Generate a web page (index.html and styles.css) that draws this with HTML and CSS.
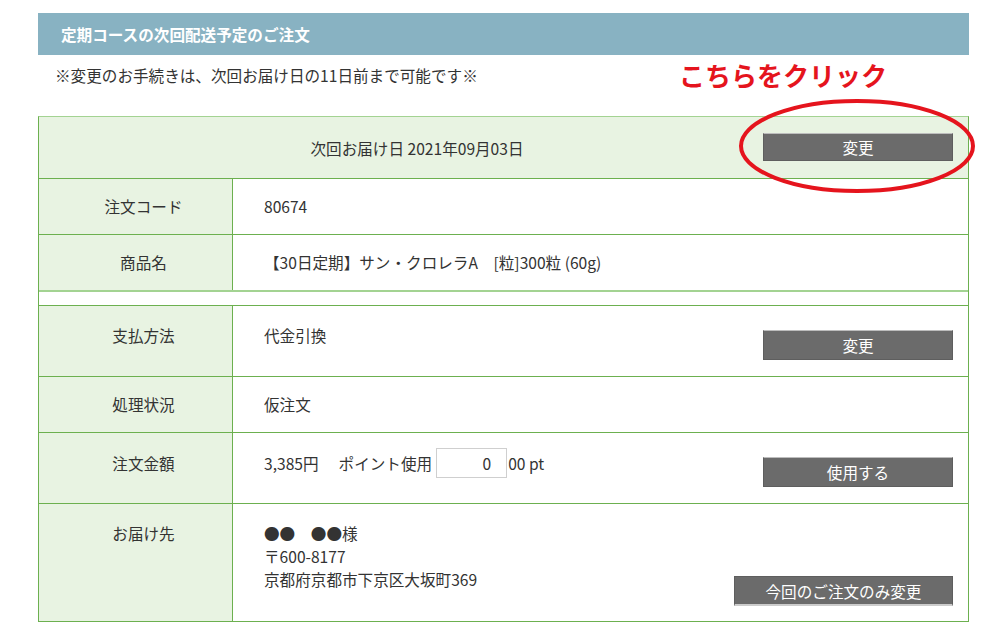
FILE: index.html
```html
<!DOCTYPE html>
<html lang="ja">
    <head>
        <meta charset="utf-8">
        <link rel="stylesheet" href="styles.css">
    </head>
    <body>
        <main class="page">
            <h2 class="head">定期コースの次回配送予定のご注文</h2>
            <p class="notice">※変更のお手続きは、次回お届け日の11日前まで可能です※</p>

            <section class="order">
                <div class="next">
                    <span class="next-date">次回お届け日 2021年09月03日</span>
                    <button class="btn btn-next">変更</button>
                </div>
                <div class="row">
                    <div class="label">注文コード</div>
                    <div class="value">80674</div>
                </div>
                <div class="row">
                    <div class="label">商品名</div>
                    <div class="value">【30日定期】サン・クロレラA　[粒]300粒 (60g)</div>
                </div>
                <div class="gap"></div>
                <div class="row row-pay">
                    <div class="label">支払方法</div>
                    <div class="value">
                        <span>代金引換</span>
                        <button class="btn">変更</button>
                    </div>
                </div>
                <div class="row">
                    <div class="label">処理状況</div>
                    <div class="value">仮注文</div>
                </div>
                <div class="row row-price">
                    <div class="label">注文金額</div>
                    <div class="value">
                        <span class="price">3,385円<span class="pt-label">ポイント使用</span><input class="pt-input" type="text" value="0"><span class="pt-unit">00 pt</span></span>
                        <button class="btn">使用する</button>
                    </div>
                </div>
                <div class="row row-addr">
                    <div class="label">お届け先</div>
                    <div class="value">
                        <div class="addr">
                            ●●　●●様<br>
                            〒600-8177<br>
                            京都府京都市下京区大坂町369
                        </div>
                        <button class="btn btn-wide">今回のご注文のみ変更</button>
                    </div>
                </div>
            </section>

            <!-- annotation drawn over the screenshot -->
            <div class="callout">こちらをクリック</div>
            <svg class="ring" width="244" height="104" viewBox="0 0 244 104">
                <ellipse cx="122" cy="50" rx="116" ry="45" fill="none" stroke="#e5141d" stroke-width="4"/>
            </svg>
        </main>
    </body>
</html>
```

FILE: styles.css
```css
body{
    margin: 0;
    background: #fff;
    color: #333;
    font-family: "Noto Sans CJK JP", "Noto Sans", sans-serif;
    font-size: 15.6px;
}
.page{
    position: relative;
    width: 931px;
    padding: 13px 0 0 38px;
}
.head{
    margin: 0;
    height: 42px;
    line-height: 42px;
    padding-left: 23px;
    background: #88b2c2;
    color: #fff;
    font-size: 15.6px;
    font-weight: bold;
}
.notice{
    margin: 9px 0 0;
    padding-left: 17px;
    line-height: 23px;
}
.order{
    margin-top: 29px;
    border: 1px solid #6cb04f;
    border-top-color: #a3d392;
}
.next{
    display: flex;
    align-items: center;
    height: 61px;
    background: #e8f3e2;
}
.next-date{
    flex: 1;
    text-align: center;
    padding-left: 32px;
}
.btn{
    width: 190px;
    height: 30px;
    padding: 0;
    border: 1px solid #5e5e5e;
    border-top-color: #bdbdbd;
    background: #6b6b6b;
    color: #fff;
    font-family: inherit;
    font-size: 15.6px;
    line-height: 26px;
    cursor: pointer;
}
.btn-next{
    height: 28px;
    margin: 0 15px 2px 0;
}
.row{
    display: flex;
    border-top: 1px solid #6cb04f;
}
.row .label{
    width: 194px;
    padding: 16px 0 16px 16px;
    box-sizing: border-box;
    background: #e8f3e2;
    border-right: 1px solid #6cb04f;
    text-align: center;
    line-height: 23px;
}
.row .value{
    flex: 1;
    display: flex;
    justify-content: space-between;
    align-items: flex-start;
    padding: 16px 15px 16px 31px;
    line-height: 23px;
}
.gap{
    height: 13px;
    border-top: 2px solid #a3d392;
}
.row-pay .label,.row-pay .value{
    padding-top: 18px;
    padding-bottom: 16px;
}
.row-pay .btn{
    margin-top: 6px;
}
.row-price .label,.row-price .value{
    padding-top: 19px;
}
.row-price .value{
    padding-top: 15px;
}
.price{
    display: flex;
    align-items: center;
    height: 30px;
}
.pt-label{
    margin-left: 20px;
}
.pt-input{
    width: 71px;
    height: 30px;
    box-sizing: border-box;
    margin-left: 4px;
    padding: 0 15px 0 0;
    border: 1px solid #cfcfcf;
    text-align: right;
    font-family: inherit;
    font-size: 15.6px;
    color: #333;
}
.pt-unit{
    margin-left: 1px;
}
.row-price .btn{
    margin-top: 9px;
}
.row-addr .label,.row-addr .value{
    padding-top: 18px;
    padding-bottom: 15px;
}
.addr{
    line-height: 23px;
}
.btn-wide{
    width: 219px;
    margin-top: 54px;
    border-top-color: #5e5e5e;
    border-bottom: 2px solid #cccccc;
}
.callout{
    position: absolute;
    left: 679px;
    top: 60px;
    line-height: 30px;
    font-size: 26px;
    font-weight: bold;
    color: #e5141d;
}
.ring{
    position: absolute;
    left: 735px;
    top: 96px;
}
```
